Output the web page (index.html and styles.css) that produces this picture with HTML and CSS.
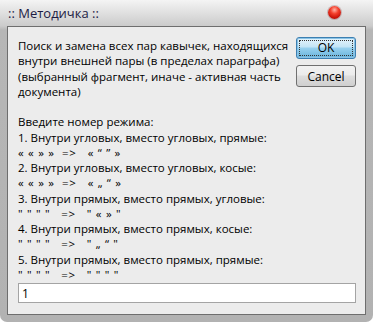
FILE: index.html
```html
<!DOCTYPE html>
<html lang="ru">
<head>
    <meta charset="UTF-8">
    <title>Методичка</title>
    <link rel="stylesheet" href="styles.css">
</head>
<body>
<div class="window">
    <div class="caption">
        <span class="caption-title">:: Методичка ::</span>
        <span class="close-btn"></span>
    </div>
    <div class="client">
        <div class="top">
            <div class="prompt">
                <div class="ln">Поиск и замена всех пар кавычек, находящихся</div>
                <div class="ln">внутри внешней пары (в пределах параграфа)</div>
                <div class="ln">(выбранный фрагмент, иначе - активная часть</div>
                <div class="ln">документа)</div>
                <div class="ln"></div>
                <div class="ln">Введите номер режима:</div>
                <div class="ln">1. Внутри угловых, вместо угловых, прямые:</div>
                <div class="ln q">« « » »  =>   « “ ” »</div>
                <div class="ln">2. Внутри угловых, вместо угловых, косые:</div>
                <div class="ln q">« « » »  =>   « „ “ »</div>
                <div class="ln">3. Внутри прямых, вместо прямых, угловые:</div>
                <div class="ln q">" " " "   =>   " « » "</div>
                <div class="ln">4. Внутри прямых, вместо прямых, косые:</div>
                <div class="ln q">" " " "   =>   " „ “ "</div>
                <div class="ln">5. Внутри прямых, вместо прямых, прямые:</div>
                <div class="ln q">" " " "   =>   " " " "</div>
            </div>
            <div class="buttons">
                <button class="btn btn-default"><span>OK</span></button>
                <button class="btn">Cancel</button>
            </div>
        </div>
        <input class="answer" type="text" value="1">
    </div>
</div>
</body>
</html>
```

FILE: styles.css
```css
* {
    margin: 0;
    padding: 0;
    box-sizing: border-box;
}

body {
    background: #fff;
    font-family: "Open Sans", "Noto Sans", sans-serif;
    font-size: 11.5px;
    color: #000;
}

.window {
    width: 373px;
    height: 322px;
    display: flex;
    flex-direction: column;
    padding: 0 7px 7px 7px;
    border-radius: 0 0 7px 7px;
    background: linear-gradient(#f4f4f4, #cbcbcb 26px, #b6b6b6 30px, #b2b2b2);
}

.caption {
    height: 26px;
    display: flex;
    align-items: center;
    justify-content: space-between;
    padding: 0 25px 0 1px;
}

.caption-title {
    font-size: 13px;
    color: #1c1c44;
}

.close-btn {
    width: 13px;
    height: 13px;
    margin-top: -2px;
    border-radius: 50%;
    background: radial-gradient(circle at 50% 30%, #ffb4a8 0, #f4402c 35%, #c9140a 70%, #8e1008 100%);
    box-shadow: 0 0 0 1px rgba(120, 40, 40, 0.25);
}

.client {
    flex: 1;
    display: flex;
    flex-direction: column;
    border: 1px solid #6e6e6e;
    background: #ececec;
    padding: 10px 9px 3px 10px;
}

.top {
    flex: 1;
    display: flex;
    justify-content: space-between;
}

.prompt {
    padding-top: 1px;
    white-space: nowrap;
}

.ln {
    height: 15.25px;
    line-height: 15.25px;
}

.q {
    white-space: pre;
    letter-spacing: 0.7px;
}

.buttons {
    display: flex;
    flex-direction: column;
    gap: 6px;
}

.btn {
    width: 60px;
    height: 22px;
    border: 1px solid #707070;
    border-radius: 3px;
    background: linear-gradient(#f2f2f2, #ebebeb 45%, #dddddd 50%, #cfcfcf);
    font-family: inherit;
    font-size: 12px;
    color: #000;
}

.btn-default {
    border-color: #3c7fb1;
    background: linear-gradient(#e5f4fc, #c4e5f6 45%, #98d1ef 50%, #68b3db);
    box-shadow: inset 0 0 0 1px #8ac3e6;
    padding: 2px;
}

.btn-default span {
    display: block;
    height: 100%;
    line-height: 14px;
    border: 1px dotted #333;
}

.answer {
    height: 20px;
    margin-bottom: 8px;
    border: 1px solid #a4a4a4;
    background: #fff;
    font-family: inherit;
    font-size: 12px;
    padding: 0 3px;
}
```
